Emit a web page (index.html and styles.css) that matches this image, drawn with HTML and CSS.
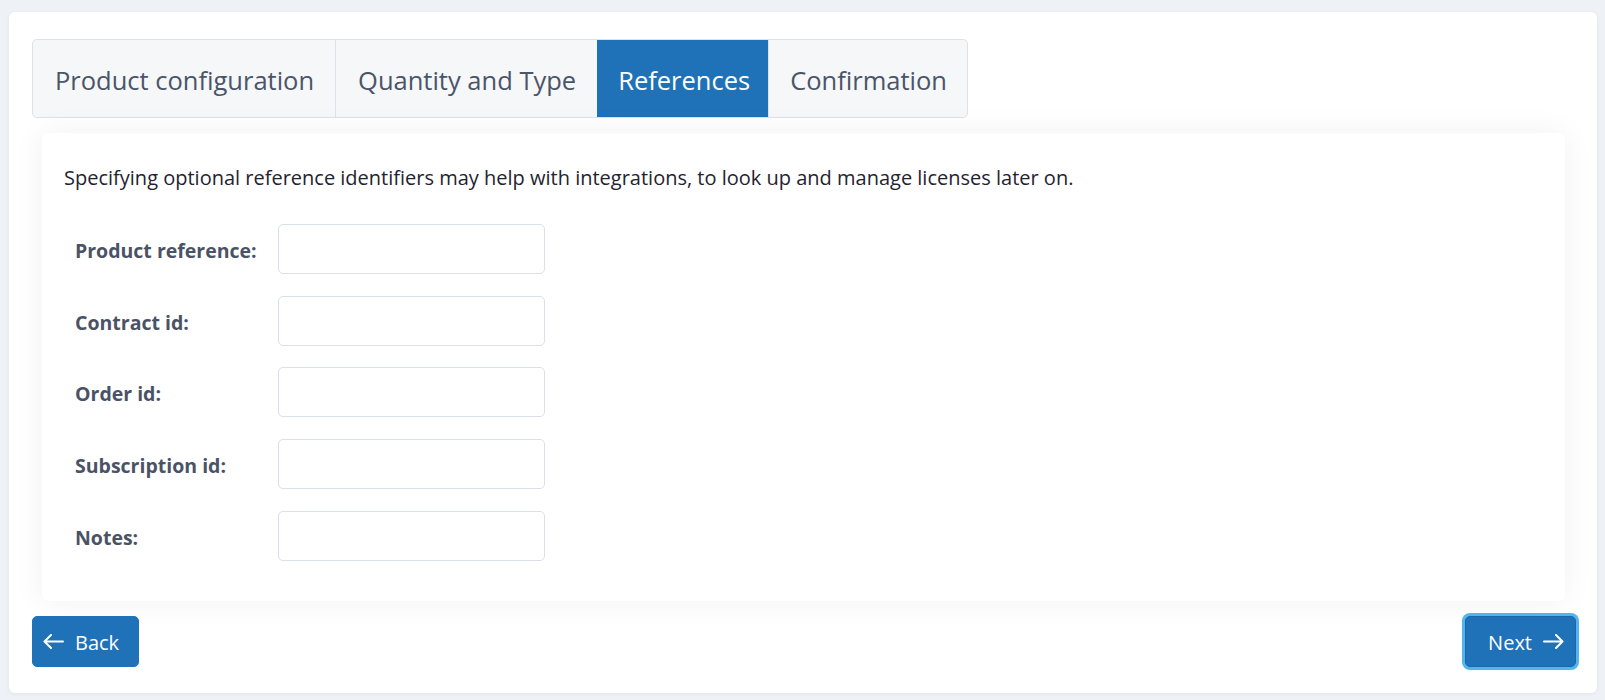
FILE: index.html
```html
<!DOCTYPE html>
<html lang="en">
<head>
<meta charset="utf-8">
<title>References</title>
<link rel="stylesheet" href="styles.css">
</head>
<body>
<div class="card">
  <div class="tabs">
    <div class="tab">Product configuration</div>
    <div class="tab">Quantity and Type</div>
    <div class="tab active">References</div>
    <div class="tab tab-last">Confirmation</div>
  </div>
  <div class="panel">
    <p class="intro">Specifying optional reference identifiers may help with integrations, to look up and manage licenses later on.</p>
    <div class="form">
      <label class="label" for="f1">Product reference:</label>
      <input class="input" id="f1" type="text">
      <label class="label" for="f2">Contract id:</label>
      <input class="input" id="f2" type="text">
      <label class="label" for="f3">Order id:</label>
      <input class="input" id="f3" type="text">
      <label class="label" for="f4">Subscription id:</label>
      <input class="input" id="f4" type="text">
      <label class="label" for="f5">Notes:</label>
      <input class="input" id="f5" type="text">
    </div>
  </div>
  <div class="actions">
    <button class="btn btn-back" type="button">
      <svg class="arrow" width="21" height="15" viewBox="0 0 21 15" aria-hidden="true"><path d="M20 7.5H1.5M8 1L1.5 7.5L8 14" fill="none" stroke="#fff" stroke-width="2" stroke-linecap="round" stroke-linejoin="round"/></svg>
      <span>Back</span>
    </button>
    <button class="btn btn-next" type="button">
      <span>Next</span>
      <svg class="arrow" width="21" height="15" viewBox="0 0 21 15" aria-hidden="true"><path d="M1 7.5H19.5M13 1L19.5 7.5L13 14" fill="none" stroke="#fff" stroke-width="2" stroke-linecap="round" stroke-linejoin="round"/></svg>
    </button>
  </div>
</div>
</body>
</html>
```

FILE: styles.css
```css
* {
  box-sizing: border-box;
}

html, body {
  margin: 0;
  height: 100%;
}

body {
  background: #eef2f6;
  padding: 12px 8px 7px 9px;
  font-family: "Open Sans", "Noto Sans", sans-serif;
  font-size: 20px;
  line-height: 1.5;
  color: #212529;
}

.card {
  height: 681px;
  background: #ffffff;
  border-radius: 6px;
  box-shadow: 0 1px 4px rgba(30, 40, 60, 0.06);
  padding: 27px 21px 26px 23px;
  display: flex;
  flex-direction: column;
}

.tabs {
  display: flex;
  align-self: flex-start;
  border: 1px solid #dde2e9;
  border-radius: 5px;
  background: #f6f7f9;
  overflow: hidden;
}

.tab {
  height: 77px;
  display: flex;
  align-items: center;
  padding: 3px 21px 0 22px;
  font-size: 25.5px;
  color: #4a5568;
  border-left: 1px solid #dde2e9;
}

.tab:first-child {
  border-left: 0;
}

.tab.active {
  background: #1f71b8;
  color: #ffffff;
  border-left-color: #1f71b8;
  padding: 3px 18px 0 20px;
}

.tab.active + .tab {
  border-left-color: #dde2e9;
}

.tab-last {
  padding: 3px 20px 0 21px;
}

.panel {
  margin: 15px 11px 0 10px;
  background: #ffffff;
  border-radius: 6px;
  box-shadow: 0 0 32px rgba(0, 0, 0, 0.06);
  padding: 30px 22px 40px;
}

.intro {
  margin: 0 0 31px;
  color: #1f2430;
}

.form {
  display: grid;
  grid-template-columns: 203px 267px;
  row-gap: 21.7px;
  align-items: center;
  margin-left: 11px;
}

.label {
  font-weight: 700;
  font-size: 19.5px;
  color: #4a5366;
  padding-top: 3px;
}

.input {
  height: 50px;
  border: 1px solid #dadfe8;
  border-radius: 5px;
  background: #ffffff;
  font: inherit;
  padding: 9px 12px;
}

.actions {
  margin-top: 15px;
  display: flex;
  justify-content: space-between;
  align-items: center;
}

.btn {
  display: flex;
  align-items: center;
  gap: 11px;
  height: 51px;
  border: 1px solid #1f71b8;
  border-radius: 5px;
  background: #1f71b8;
  color: #ffffff;
  font-family: inherit;
  font-size: 20px;
  line-height: 1.5;
  cursor: pointer;
}

.btn span {
  padding-top: 3px;
}

.btn-back {
  padding: 0 19px 0 10px;
}

.btn-next {
  padding: 0 11px 0 22px;
  border-color: #1a66a8;
  box-shadow: 0 0 0 3px #54b4ee;
}

.arrow {
  display: block;
  flex: none;
}
```
